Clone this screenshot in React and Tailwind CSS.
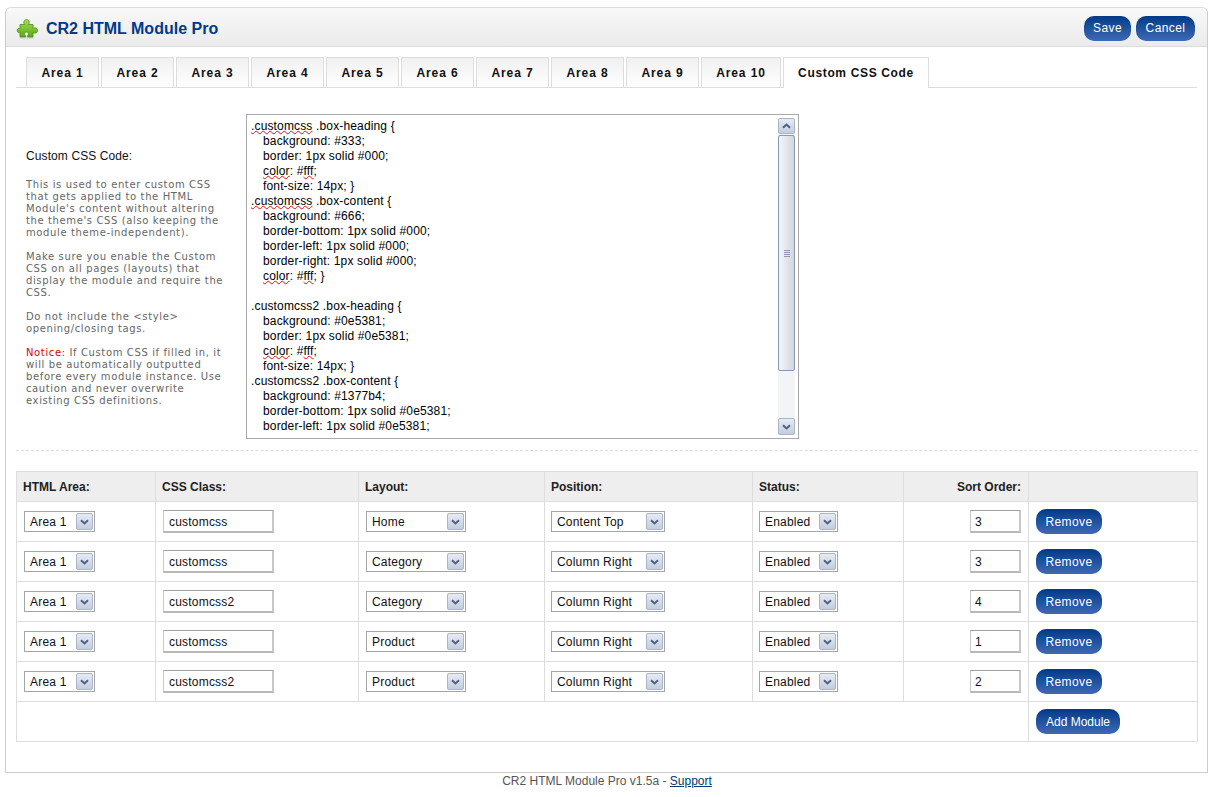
const tabs = ["Area 1", "Area 2", "Area 3", "Area 4", "Area 5", "Area 6", "Area 7", "Area 8", "Area 9", "Area 10"];

const rows = [
  { css: "customcss", layout: "Home", position: "Content Top", sort: "3" },
  { css: "customcss", layout: "Category", position: "Column Right", sort: "3" },
  { css: "customcss2", layout: "Category", position: "Column Right", sort: "4" },
  { css: "customcss", layout: "Product", position: "Column Right", sort: "1" },
  { css: "customcss2", layout: "Product", position: "Column Right", sort: "2" },
];

const cols = ["w-[139px]", "w-[203px]", "w-[186px]", "w-[208px]", "w-[151px]", "w-[125px]", "w-[169px]"];

function Squiggle({ children }) {
  return <span className="underline decoration-wavy decoration-[#e01010] decoration-1 underline-offset-[0px] [text-decoration-skip-ink:none]">{children}</span>;
}

function Chevron({ up }) {
  return (
    <svg width="9" height="6" viewBox="0 0 9 6" className={up ? "rotate-180" : ""}>
      <path d="M1 1.2 L4.5 4.5 L8 1.2" fill="none" stroke="#4d6185" strokeWidth="2" />
    </svg>
  );
}

function ArrowButton({ up, className }) {
  return (
    <div className={`flex items-center justify-center rounded-[2px] border border-[#a9b5c9] bg-linear-to-b from-[#e6ebf3] to-[#c3cddd] ${className}`}>
      <Chevron up={up} />
    </div>
  );
}

function Select({ value, width }) {
  return (
    <div className={`flex h-[21px] items-center justify-between border border-[#a5a5a5] bg-white pl-[5px] pr-px text-[12px] text-[#111] ${width}`}>
      <span className="tracking-[0.2px]">{value}</span>
      <ArrowButton className="h-[17px] w-[17px]" />
    </div>
  );
}

function Button({ children, className = "tracking-[0.4px]" }) {
  return (
    <div className={`inline-flex h-[25px] items-center justify-center rounded-[10px] bg-linear-to-b from-[#003a88] to-[#3d6ab4] text-[12px] text-white ${className}`}>
      {children}
    </div>
  );
}

function TextInput({ value, width }) {
  return (
    <input
      readOnly
      value={value}
      className={`block h-[23px] border-t border-l border-r-2 border-b-2 border-t-[#a0a0a0] border-l-[#c8c8c8] border-r-[#c8c8c8] border-b-[#b8b8b8] bg-white pt-px text-[12px] tracking-[0.2px] text-[#111] outline-none ${width}`}
    />
  );
}

function PuzzleIcon() {
  return (
    <svg width="22" height="22" viewBox="0 0 22 22">
      <defs>
        <linearGradient id="pz" x1="0" y1="0" x2="0" y2="1">
          <stop offset="0" stopColor="#a8de52" />
          <stop offset="1" stopColor="#5aa818" />
        </linearGradient>
      </defs>
      <ellipse cx="11" cy="20" rx="8" ry="1.5" fill="#dcdcdc" />
      <path
        d="M4 6.500H8.600C7.400 5.600 7.200 2 10.500 1.500C13.800 2 13.600 5.600 12.400 6.500H17V10.600C18 9.400 21.600 9.600 21.600 12.500C21.600 15.400 18 15.600 17 14.400V19H11.500V17.500C13 16.800 12.800 14 10.500 14C8.200 14 8 16.800 9.500 17.500V19H4V14.500C3 15 1.200 14.600 1.200 12.500C1.200 10.400 3 10 4 10.500Z"
        fill="url(#pz)"
        stroke="#4a8f14"
        strokeWidth="0.8"
      />
    </svg>
  );
}

function Scrollbar() {
  return (
    <div className="my-[3px] mr-[3px] flex w-[17px] shrink-0 flex-col gap-px bg-[#f3f4f7]">
      <ArrowButton up className="h-[16px] w-full" />
      <div className="flex h-[236px] items-center justify-center rounded-[2px] border border-[#8a99b3] bg-linear-to-r from-[#f4f5f8] via-[#e3e6ec] to-[#d2d6df]">
        <div className="flex w-[6px] flex-col gap-px">
          <div className="h-px bg-[#8f99ab]" />
          <div className="h-px bg-[#8f99ab]" />
          <div className="h-px bg-[#8f99ab]" />
          <div className="h-px bg-[#8f99ab]" />
        </div>
      </div>
      <div className="flex-1" />
      <ArrowButton className="h-[17px] w-full" />
    </div>
  );
}

function Rule({ children }) {
  return <div className="h-[15px] whitespace-pre pl-[12px]">{children}</div>;
}

function CodeBox() {
  return (
    <div className="flex h-[325px] w-[553px] justify-between border border-[#a9a9a9] bg-white">
      <div className="overflow-hidden pl-1 pt-1 text-[12px] leading-[15px] tracking-[0.15px] text-black">
        <div className="h-[15px] whitespace-pre"><Squiggle>.customcss</Squiggle> .box-heading {"{"}</div>
        <Rule>background: #333;</Rule>
        <Rule>border: 1px solid #000;</Rule>
        <Rule><Squiggle>color</Squiggle>: #<Squiggle>fff</Squiggle>;</Rule>
        <Rule>font-size: 14px; {"}"}</Rule>
        <div className="h-[15px] whitespace-pre"><Squiggle>.customcss</Squiggle> .box-content {"{"}</div>
        <Rule>background: #666;</Rule>
        <Rule>border-bottom: 1px solid #000;</Rule>
        <Rule>border-left: 1px solid #000;</Rule>
        <Rule>border-right: 1px solid #000;</Rule>
        <Rule><Squiggle>color</Squiggle>: #<Squiggle>fff</Squiggle>; {"}"}</Rule>
        <div className="h-[15px]" />
        <div className="h-[15px] whitespace-pre">.customcss2 .box-heading {"{"}</div>
        <Rule>background: #0e5381;</Rule>
        <Rule>border: 1px solid #0e5381;</Rule>
        <Rule><Squiggle>color</Squiggle>: #<Squiggle>fff</Squiggle>;</Rule>
        <Rule>font-size: 14px; {"}"}</Rule>
        <div className="h-[15px] whitespace-pre">.customcss2 .box-content {"{"}</div>
        <Rule>background: #1377b4;</Rule>
        <Rule>border-bottom: 1px solid #0e5381;</Rule>
        <Rule>border-left: 1px solid #0e5381;</Rule>
      </div>
      <Scrollbar />
    </div>
  );
}

export default function App() {
  return (
    <div className="h-[797px] overflow-hidden bg-white font-['Liberation_Sans',Arial,sans-serif] text-[12px] text-black">
      {/* Main panel */}
      <div className="ml-[5px] mt-[7px] h-[766px] w-[1203px] rounded-t-[6px] border border-[#ccc] border-t-[#ddd]">
        <div className="flex h-[39px] items-center justify-between rounded-t-[6px] border-b border-[#ddd] bg-linear-to-b from-[#f8f8f8] to-[#ebebeb] pl-[10px] pr-[12px]">
          <div className="mt-[4px] flex items-center gap-[8px]">
            <PuzzleIcon />
            <span className="text-[16px] font-bold text-[#003a88]">CR2 HTML Module Pro</span>
          </div>
          <div className="mt-[2px] flex gap-[5px]">
            <Button className="w-[47px] tracking-[0.4px]">Save</Button>
            <Button className="w-[59px] tracking-[0.4px]">Cancel</Button>
          </div>
        </div>

        <div className="px-[10px] pt-[10px]">
          {/* Tabs */}
          <div className="flex gap-[2px] border-b border-[#ddd] pl-[10px]">
            {tabs.map((t) => (
              <div
                key={t}
                className={`flex h-[30px] items-center justify-center border border-b-0 border-[#ddd] bg-linear-to-b from-[#f0f0f0] to-white pt-px text-[12px] font-bold tracking-[0.9px] text-[#111] ${t === "Area 10" ? "w-[80px]" : "w-[73px]"}`}
              >
                {t}
              </div>
            ))}
            <div className="-mb-px flex h-[31px] w-[146px] items-center justify-center border border-b-0 border-[#ddd] bg-white text-[12px] font-bold tracking-[0.65px] text-[#111]">
              Custom CSS Code
            </div>
          </div>

          {/* Custom css form row */}
          <div className="flex border-b border-dashed border-[#ddd] pb-[11px] pt-[26px]">
            <div className="w-[230px] pl-[10px] pt-[35px]">
              <div className="text-[12px] leading-[14px] tracking-[0.1px] text-[#111]">Custom CSS Code:</div>
              <div className="mt-[16px] flex flex-col gap-[12px] whitespace-nowrap font-['DejaVu_Sans',sans-serif] text-[10px] leading-[12px] tracking-[0.62px] text-[#666]">
                <p>This is used to enter custom CSS<br />that gets applied to the HTML<br />Module's content without altering<br />the theme's CSS (also keeping the<br />module theme-independent).</p>
                <p>Make sure you enable the Custom<br />CSS on all pages (layouts) that<br />display the module and require the<br />CSS.</p>
                <p>Do not include the &lt;style&gt;<br />opening/closing tags.</p>
                <p><span className="text-[#e00000]">Notice:</span> If Custom CSS if filled in, it<br />will be automatically outputted<br />before every module instance. Use<br />caution and never overwrite<br />existing CSS definitions.</p>
              </div>
            </div>
            <CodeBox />
          </div>

          {/* Modules table */}
          <table className="mt-[20px] w-[1181px] table-fixed border-collapse">
            <colgroup>
              {cols.map((c) => <col key={c} className={c} />)}
            </colgroup>
            <thead>
              <tr className="h-[30px] bg-[#eee] text-left text-[12px] font-bold text-[#222]">
                <th className="border border-[#ddd] pl-[6px]">HTML Area:</th>
                <th className="border border-[#ddd] pl-[6px]">CSS Class:</th>
                <th className="border border-[#ddd] pl-[6px]">Layout:</th>
                <th className="border border-[#ddd] pl-[6px]">Position:</th>
                <th className="border border-[#ddd] pl-[6px]">Status:</th>
                <th className="border border-[#ddd] pr-[7px] text-right">Sort Order:</th>
                <th className="border border-[#ddd]" />
              </tr>
            </thead>
            <tbody>
              {rows.map((r, i) => (
                <tr key={i} className="h-[40px]">
                  <td className="border border-[#ddd] pl-[7px]"><Select value="Area 1" width="w-[71px]" /></td>
                  <td className="border border-[#ddd] pl-[7px]"><TextInput value={r.css} width="w-[111px] pl-[5px]" /></td>
                  <td className="border border-[#ddd] pl-[7px]"><Select value={r.layout} width="w-[100px]" /></td>
                  <td className="border border-[#ddd] pl-[6px]"><Select value={r.position} width="w-[114px]" /></td>
                  <td className="border border-[#ddd] pl-[6px]"><Select value="Enabled" width="w-[79px]" /></td>
                  <td className="border border-[#ddd] pr-[7px]"><div className="flex justify-end"><TextInput value={r.sort} width="w-[51px] pl-[4px]" /></div></td>
                  <td className="border border-[#ddd] pl-[7px]"><Button className="w-[66px] tracking-[0.4px]">Remove</Button></td>
                </tr>
              ))}
              <tr className="h-[40px]">
                <td colSpan={6} className="border border-[#ddd]" />
                <td className="border border-[#ddd] pl-[7px]"><Button className="w-[84px] tracking-[0px]">Add Module</Button></td>
              </tr>
            </tbody>
          </table>
        </div>
      </div>

      <div className="mt-[1px] pr-[2px] text-center text-[12px] leading-[14px] text-[#555]">
        CR2 HTML Module Pro v1.5a - <span className="text-[#003a70] underline">Support</span>
      </div>
    </div>
  );
}
